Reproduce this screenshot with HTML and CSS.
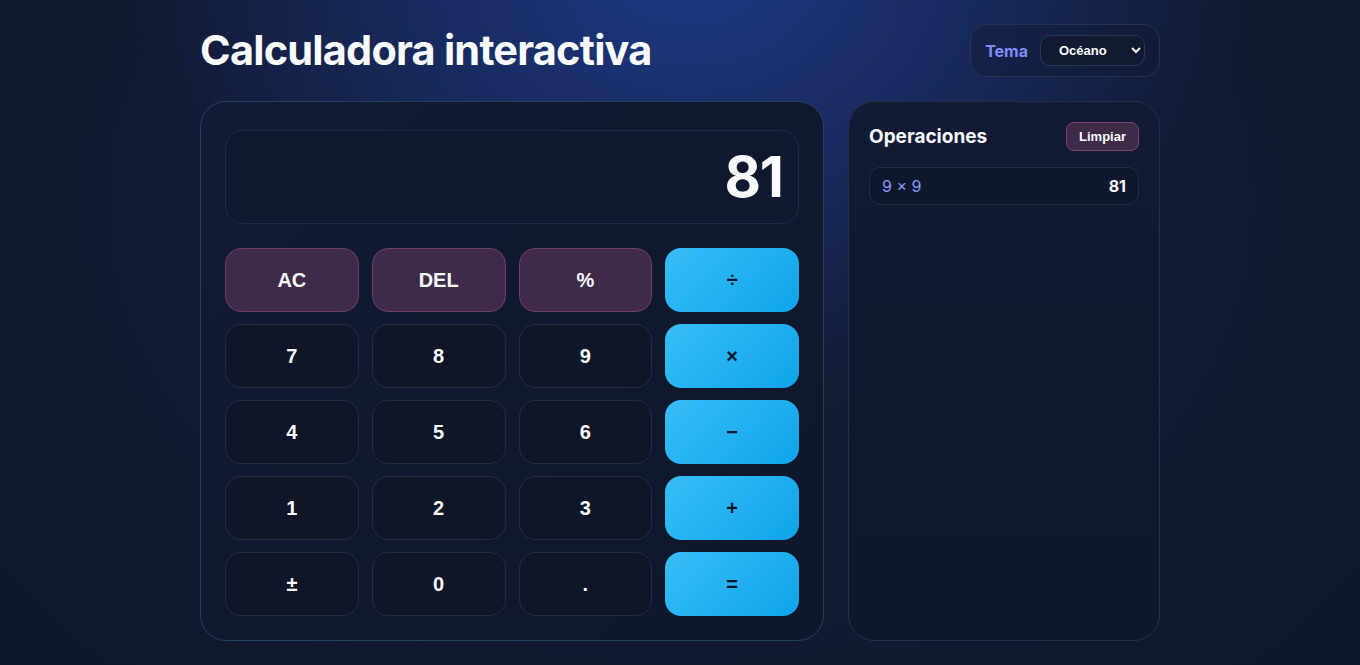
FILE: index.html
```html
<!DOCTYPE html>
<html lang="es">
<head>
  <meta charset="UTF-8">
  <meta name="viewport" content="width=device-width, initial-scale=1.0">
  <title>Calculadora interactiva</title>
  <link rel="stylesheet" href="styles.css">
</head>
<body>
  <div class="app">
    <header class="top">
      <h1>Calculadora interactiva</h1>
      <div class="theme-box">
        <label for="theme">Tema</label>
        <select id="theme">
          <option>Océano</option>
          <option>Noche</option>
          <option>Bosque</option>
        </select>
      </div>
    </header>

    <main class="layout">
      <section class="calc">
        <div class="display" id="display">81</div>
        <div class="keys">
          <button class="key fn">AC</button>
          <button class="key fn">DEL</button>
          <button class="key fn">%</button>
          <button class="key op">÷</button>
          <button class="key">7</button>
          <button class="key">8</button>
          <button class="key">9</button>
          <button class="key op">×</button>
          <button class="key">4</button>
          <button class="key">5</button>
          <button class="key">6</button>
          <button class="key op">−</button>
          <button class="key">1</button>
          <button class="key">2</button>
          <button class="key">3</button>
          <button class="key op">+</button>
          <button class="key">±</button>
          <button class="key">0</button>
          <button class="key">.</button>
          <button class="key op">=</button>
        </div>
      </section>

      <aside class="history">
        <div class="history-head">
          <h2>Operaciones</h2>
          <button class="clear">Limpiar</button>
        </div>
        <ul class="history-list">
          <li class="entry"><span class="expr">9 × 9</span><span class="result">81</span></li>
        </ul>
      </aside>
    </main>
  </div>
</body>
</html>
```

FILE: styles.css
```css
* {
  box-sizing: border-box;
}
html, body {
  height: 100%;
}
body {
  margin: 0;
  font-family: Inter, "Noto Sans", sans-serif;
  color: #f8fafc;
  background:
    radial-gradient(ellipse 560px 420px at 690px -40px, rgba(30, 58, 138, 0.95), rgba(30, 58, 138, 0) 100%),
    radial-gradient(ellipse 900px 700px at 680px 200px, rgba(22, 34, 70, 0.7), rgba(15, 23, 42, 0) 100%),
    #0f172a;
  overflow: hidden;
}
.app {
  width: 960px;
  margin: 0 auto;
  padding-top: 24px;
}
.top {
  display: flex;
  justify-content: space-between;
  align-items: center;
  height: 53px;
  margin-bottom: 24px;
}
h1 {
  margin: 0;
  font-size: 41.5px;
  font-weight: 700;
  letter-spacing: -0.8px;
  line-height: 1;
}
.theme-box {
  display: flex;
  align-items: center;
  gap: 12px;
  height: 53px;
  padding: 0 14px 0 14px;
  border: 1px solid #27334d;
  border-radius: 16px;
  background: rgba(15, 23, 42, 0.35);
}
.theme-box label {
  color: #818cf8;
  font-weight: 700;
  font-size: 16px;
}
.theme-box select {
  width: 105px;
  height: 31px;
  padding: 0 8px 0 14px;
  font-family: "Liberation Sans", Arial, sans-serif;
  font-size: 13px;
  font-weight: 700;
  color: #f8fafc;
  background: #111a31;
  border: 1px solid #2b3650;
  border-radius: 10px;
}
.layout {
  display: grid;
  grid-template-columns: 624px 312px;
  gap: 24px;
}
.calc {
  height: 540px;
  padding: 28px 24px 24px;
  border: 1px solid #24405f;
  border-radius: 26px;
  background: linear-gradient(135deg, #121a35, #0f172a);
}
.display {
  height: 94px;
  padding: 0 15px;
  margin-bottom: 24px;
  display: flex;
  align-items: center;
  justify-content: flex-end;
  font-size: 56px;
  font-weight: 700;
  letter-spacing: -1px;
  border: 1px solid #1f2a44;
  border-radius: 18px;
  background: #10182f;
}
.keys {
  display: grid;
  grid-template-columns: repeat(4, 1fr);
  grid-auto-rows: 64px;
  gap: 12px 13px;
}
.key {
  font-family: "Liberation Sans", Arial, sans-serif;
  font-size: 20px;
  font-weight: 700;
  color: #f8fafc;
  background: #0e1628;
  border: 1px solid #222d43;
  border-radius: 16px;
  cursor: pointer;
}
.key.fn {
  background: #3f2a48;
  border-color: #6f3e6e;
}
.key.op {
  color: #0f172a;
  border: none;
  background: linear-gradient(135deg, #38bdf8, #0ea5e9);
}
.history {
  height: 540px;
  padding: 20px 20px;
  border: 1px solid #24304a;
  border-radius: 26px;
  background: linear-gradient(180deg, #121a35, #0f172a);
}
.history-head {
  display: flex;
  justify-content: space-between;
  align-items: center;
  margin-bottom: 16px;
}
.history-head h2 {
  margin: 0;
  font-size: 19px;
  font-weight: 700;
}
.clear {
  height: 29px;
  padding: 0 12px;
  font-family: "Liberation Sans", Arial, sans-serif;
  font-size: 13px;
  font-weight: 700;
  color: #f8fafc;
  background: #3f2a48;
  border: 1px solid #7a4474;
  border-radius: 8px;
  cursor: pointer;
}
.history-list {
  list-style: none;
  margin: 0;
  padding: 0;
}
.entry {
  display: flex;
  justify-content: space-between;
  align-items: center;
  height: 38px;
  padding: 0 12px;
  border: 1px solid #222d43;
  border-radius: 11px;
  background: #0f172c;
  font-size: 16px;
}
.expr {
  color: #8b9cf8;
}
.result {
  font-weight: 700;
}
```
